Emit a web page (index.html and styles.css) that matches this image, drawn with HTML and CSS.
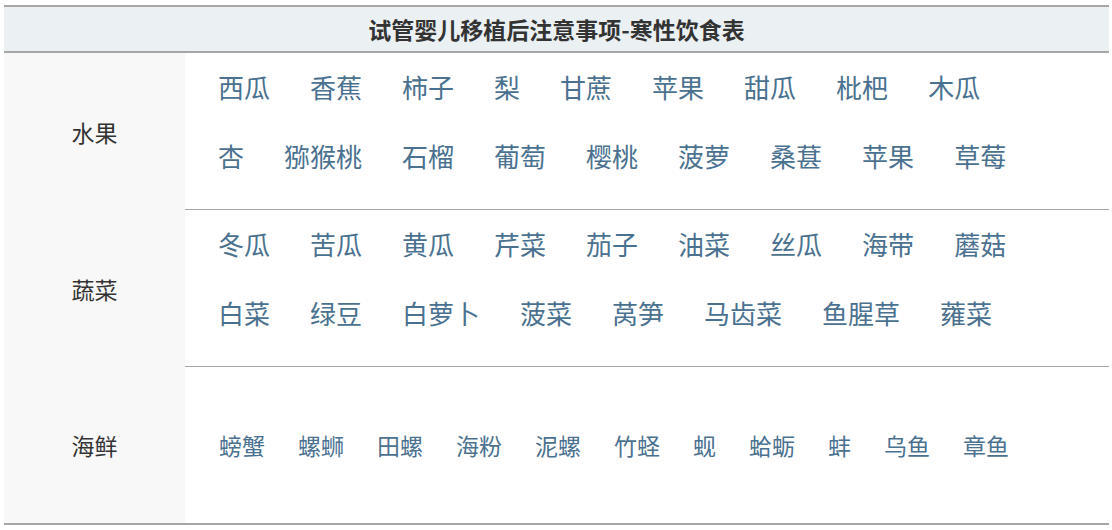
FILE: index.html
```html
<!DOCTYPE html>
<html lang="zh-CN">
<head>
<meta charset="utf-8">
<title>试管婴儿移植后注意事项-寒性饮食表</title>
<link rel="stylesheet" href="styles.css">
</head>
<body>
<div class="table">
  <div class="head">试管婴儿移植后注意事项-寒性饮食表</div>
  <div class="body">
    <div class="label">水果</div>
    <div class="cell">
      <div class="line"><span>西瓜</span><span>香蕉</span><span>柿子</span><span>梨</span><span>甘蔗</span><span>苹果</span><span>甜瓜</span><span>枇杷</span><span>木瓜</span></div>
      <div class="line"><span>杏</span><span>猕猴桃</span><span>石榴</span><span>葡萄</span><span>樱桃</span><span>菠萝</span><span>桑葚</span><span>苹果</span><span>草莓</span></div>
    </div>
    <div class="label">蔬菜</div>
    <div class="cell">
      <div class="line"><span>冬瓜</span><span>苦瓜</span><span>黄瓜</span><span>芹菜</span><span>茄子</span><span>油菜</span><span>丝瓜</span><span>海带</span><span>蘑菇</span></div>
      <div class="line"><span>白菜</span><span>绿豆</span><span>白萝卜</span><span>菠菜</span><span>莴笋</span><span>马齿菜</span><span>鱼腥草</span><span>蕹菜</span></div>
    </div>
    <div class="label">海鲜</div>
    <div class="cell small">
      <div class="line"><span>螃蟹</span><span>螺蛳</span><span>田螺</span><span>海粉</span><span>泥螺</span><span>竹蛏</span><span>蚬</span><span>蛤蛎</span><span>蚌</span><span>乌鱼</span><span>章鱼</span></div>
    </div>
  </div>
</div>
</body>
</html>
```
FILE: styles.css
```css
html, body {
  margin: 0;
  padding: 0;
  background: #ffffff;
}

body {
  font-family: "Noto Sans CJK SC", "Noto Sans", sans-serif;
}

.table {
  margin: 5px 3px 0 4px;
  width: 1105px;
  border-top: 2px solid #a6a6a6;
  border-bottom: 2px solid #a6a6a6;
}

.head {
  height: 44px;
  line-height: 44px;
  background: #ebf0f3;
  border-bottom: 2px solid #a6a6a6;
  text-align: center;
  font-size: 23px;
  font-weight: bold;
  color: #333333;
}

.body {
  display: grid;
  grid-template-columns: 181px 1fr;
}

.label {
  background: #f8f8f8;
  display: flex;
  align-items: center;
  justify-content: center;
  font-size: 23px;
  color: #333333;
}

.cell {
  padding: 16px 0 2px 33px;
  border-bottom: 1px solid #a6a6a6;
}

.cell:last-child {
  border-bottom: none;
}

.line {
  display: flex;
  gap: 40px;
  height: 36px;
  line-height: 36px;
  margin-bottom: 33px;
  font-size: 26px;
  color: #4a7190;
  white-space: nowrap;
}

.cell.small {
  height: 156px;
  box-sizing: border-box;
  padding: 0 0 0 34px;
  display: flex;
  align-items: center;
}

.cell.small .line {
  margin: 0;
  gap: 33px;
  font-size: 23px;
}
```
